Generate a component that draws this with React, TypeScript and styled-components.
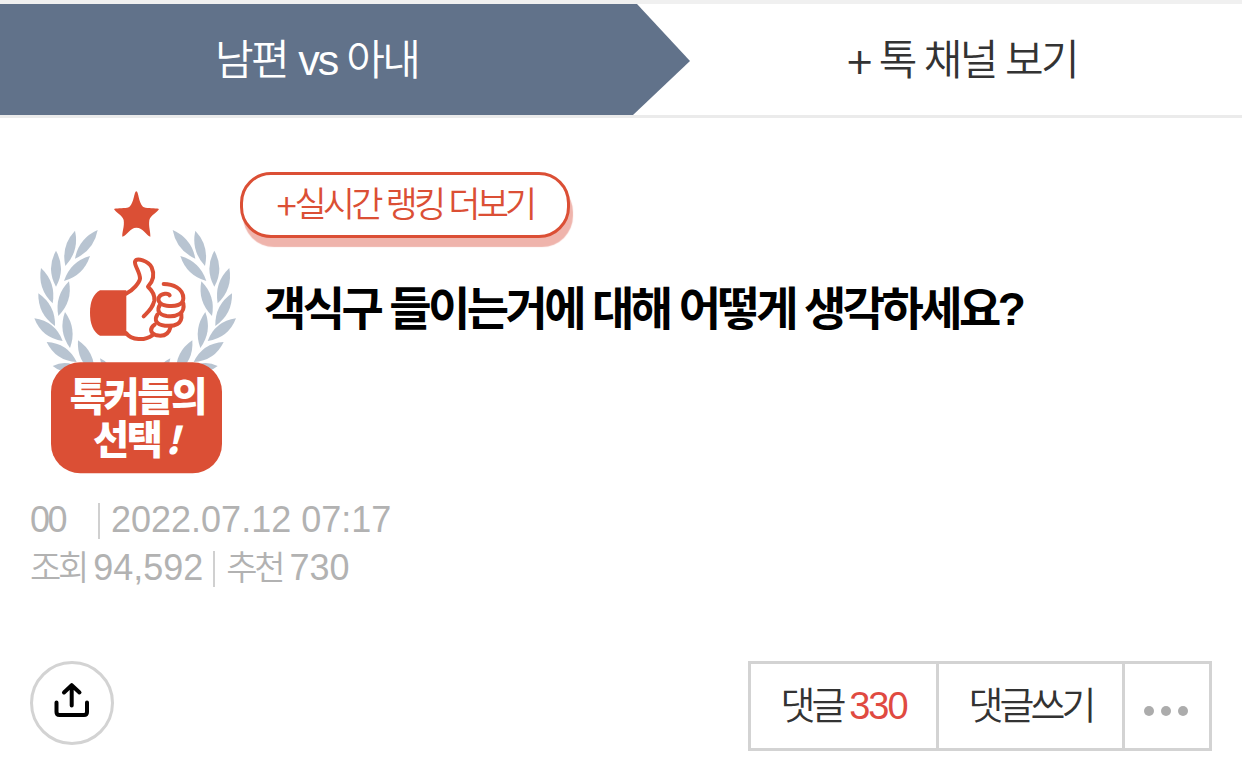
import React from 'react';
import styled, { createGlobalStyle } from 'styled-components';

const GlobalStyle = createGlobalStyle`
  * {
    box-sizing: border-box;
  }

  body {
    margin: 0;
    background: #ffffff;
    font-family: 'Liberation Sans', 'Noto Sans CJK KR', sans-serif;
    font-weight: 350;
  }

  button {
    font-family: inherit;
    font-weight: inherit;
    padding: 0;
    cursor: pointer;
  }
`;

// tip x, tip y, base x, base y, bulge
const leaves = [
  [165, 152, 136, 258, 29],
  [233, 150, 165, 236, 29],
  [210, 228, 132, 303, 29],
  [108, 212, 108, 320, 30],
  [63, 264, 98, 370, 30],
  [147, 304, 115, 408, 29],
  [55, 340, 105, 438, 30],
  [135, 396, 150, 504, 29],
  [43, 415, 128, 483, 32],
  [80, 486, 170, 546, 32],
  [174, 481, 222, 580, 32],
  [98, 558, 180, 566, 26],
  [240, 535, 280, 590, 20],
];

const leafPath = ([tx, ty, bx, by, bulge]: number[]) => {
  const length = Math.hypot(bx - tx, by - ty);
  const nx = (-(by - ty) / length) * bulge;
  const ny = ((bx - tx) / length) * bulge;
  const mx = (tx + bx) / 2;
  const my = (ty + by) / 2;
  return `M${tx} ${ty}Q${mx + nx} ${my + ny} ${bx} ${by}Q${mx - nx} ${my - ny} ${tx} ${ty}Z`;
};

const Wreath = () => (
  <g fill="#b8c4d1">
    {leaves.map((leaf, i) => (
      <path key={i} d={leafPath(leaf)} />
    ))}
  </g>
);

const ChoiceBadge = () => (
  <BadgeSvg viewBox="30 30 630 855">
    <Wreath />
    <g transform="translate(691 0) scale(-1 1)">
      <Wreath />
    </g>
    <path
      fill="#db4f35"
      d="M349 34C356 34 356 74 372 82C383 86 405 84 417 87C412 98 392 105 388 120C385 140 392 155 391 170C378 165 370 143 349 143C330 143 322 165 307 170C306 155 314 140 311 120C307 105 287 98 282 87C295 84 315 86 326 82C342 74 342 34 349 34Z"
    />
    <path fill="#db4f35" d="M319 331H240Q210 348 210 398Q210 450 240 467H319Z" />
    <g fill="none" stroke="#db4f35" strokeWidth="12" strokeLinecap="round" strokeLinejoin="round">
      <path d="M318 341C340 330 358 308 360 296C360 275 343 258 345 245C350 231 385 243 395 262C405 285 398 305 384 320C400 335 405 350 403 362C398 385 385 395 371 409" />
      <path d="M318 459C335 482 375 482 397 466" />
      <path d="M431 312C458 312 490 325 490 355C490 376 465 380 440 377C415 374 412 358 418 350C425 340 445 338 449 346" />
      <path d="M490 370C496 400 470 412 440 408C415 404 410 390 420 374" />
      <path d="M484 402C488 432 465 440 435 437C408 434 402 420 412 404" />
      <path d="M452 440C446 464 430 470 410 466C390 460 388 445 404 434" />
    </g>
    <rect x="93" y="547" width="513" height="333" rx="88" fill="#db4f35" />
    <BadgeText x="149" y="692">
      톡커들의
    </BadgeText>
    <BadgeText x="219" y="821">
      선택
      <tspan dx="14" fontStyle="italic" fontSize="112">
        !
      </tspan>
    </BadgeText>
  </BadgeSvg>
);

const App: React.FC = () => {
  return (
    <>
      <GlobalStyle />
      <Header>
        <CurrentTab>
          남편 <Latin>vs</Latin> 아내
        </CurrentTab>
        <ChannelTab>
          <Plus>+</Plus> 톡 채널 보기
        </ChannelTab>
      </Header>
      <Article>
        <Top>
          <ChoiceBadge />
          <Heading>
            <RankingButton>
              <SmallPlus>+</SmallPlus>실시간 랭킹 더보기
            </RankingButton>
            <Title>객식구 들이는거에 대해 어떻게 생각하세요?</Title>
          </Heading>
        </Top>
        <Meta>
          <MetaRow>
            <Writer>00</Writer>
            <Bar />
            <Num>2022.07.12 07:17</Num>
          </MetaRow>
          <MetaRow>
            <Label>조회</Label>
            <Num>94,592</Num>
            <Bar />
            <Label>추천</Label>
            <Num>730</Num>
          </MetaRow>
        </Meta>
        <Actions>
          <ShareButton aria-label="공유">
            <svg width="36" height="36" viewBox="0 0 36 36" fill="none" stroke="#000" strokeWidth="4" strokeLinecap="round" strokeLinejoin="round">
              <path d="M2.5 17.5V27Q2.5 30 5.5 30H30Q33 30 33 27V17.5" />
              <path d="M17.7 20.5V0.8M10 7.5L17.7 0.2L25.5 7.5" />
            </svg>
          </ShareButton>
          <ButtonGroup>
            <GroupButton width={188}>
              댓글 <Count>330</Count>
            </GroupButton>
            <GroupButton width={186}>댓글쓰기</GroupButton>
            <GroupButton width={84} aria-label="더보기">
              <Dots>
                <i />
                <i />
                <i />
              </Dots>
            </GroupButton>
          </ButtonGroup>
        </Actions>
      </Article>
    </>
  );
};

export default App;

const Header = styled.header`
  display: flex;
  height: 118px;
  border-top: 4px solid #f0f0f0;
  border-bottom: 3px solid #ebebeb;
  font-size: 42px;
  line-height: 113px;
  letter-spacing: -2.6px;
  white-space: pre;
`;

const CurrentTab = styled.div`
  width: 690px;
  padding-left: 215px;
  background: #61728a;
  color: #ffffff;
  clip-path: polygon(0 0, 637px 0, 100% 57px, 633px 100%, 0 100%);
`;

const Latin = styled.span`
  margin-left: 2px;
  font-size: 43px;
  letter-spacing: -2px;
`;

const ChannelTab = styled.div`
  flex: 1;
  padding-left: 157px;
  color: #333333;
`;

const Plus = styled.span`
  display: inline-block;
  font-family: 'Noto Sans CJK KR', sans-serif;
  font-size: 46px;
  line-height: 1;
  transform: translateY(4px);
`;

const Article = styled.main`
  padding: 54px 30px 0;
`;

const Top = styled.section`
  display: flex;
  height: 321px;
`;

const BadgeSvg = styled.svg`
  width: 210px;
  height: 285px;
  margin-top: 18px;
  overflow: visible;
`;

const BadgeText = styled.text`
  font-family: 'Noto Sans CJK KR', sans-serif;
  font-size: 118px;
  font-weight: 900;
  letter-spacing: -7px;
  fill: #ffffff;
`;

const Heading = styled.div`
  flex: 1;
`;

const RankingButton = styled.button`
  display: block;
  width: 330px;
  height: 66px;
  border: 3px solid #db4f35;
  border-radius: 31px;
  background: #ffffff;
  box-shadow: 3px 9px 1px #efb4ac;
  color: #db4f35;
  font-size: 35px;
  line-height: 60px;
  letter-spacing: -3.8px;
  white-space: nowrap;
`;

const SmallPlus = styled.span`
  display: inline-block;
  font-family: 'Noto Sans CJK KR', sans-serif;
  font-size: 37px;
  line-height: 1;
  letter-spacing: -2.4px;
  transform: translateY(3px);
`;

const Title = styled.h1`
  margin: 41px 0 0 24px;
  color: #000000;
  font-size: 46px;
  font-weight: 700;
  line-height: 60px;
  letter-spacing: -3.6px;
  white-space: nowrap;
`;

const Meta = styled.div`
  padding-top: 3px;
  color: #b2b2b2;
  font-size: 36px;
`;

const MetaRow = styled.div`
  display: flex;
  align-items: center;
  height: 48px;
  line-height: 48px;
`;

const Writer = styled.span`
  width: 58px;
  letter-spacing: -2.5px;
`;

const Bar = styled.i`
  width: 2px;
  height: 36px;
  margin: 2px 11px 0 10px;
  background: #d0d0d0;
`;

const Label = styled.span`
  margin-right: 7px;
  font-size: 34px;
  letter-spacing: -3.2px;
`;

const Num = styled.span``;

const Actions = styled.div`
  display: flex;
  justify-content: space-between;
  margin-top: 69px;
`;

const ShareButton = styled.button`
  display: flex;
  align-items: center;
  justify-content: center;
  width: 84px;
  height: 84px;
  border: 3px solid #d3d3d3;
  border-radius: 50%;
  background: #ffffff;

  svg {
    overflow: visible;
  }
`;

const ButtonGroup = styled.div`
  display: flex;
  width: 464px;
  height: 90px;
  border: 3px solid #d3d3d3;
`;

const GroupButton = styled.button<{ width: number }>`
  width: ${({ width }) => width}px;
  border: 0;
  border-right: 3px solid #d3d3d3;
  background: #ffffff;
  color: #333333;
  font-size: 38px;
  line-height: 80px;
  letter-spacing: -3.9px;
  white-space: nowrap;

  &:last-child {
    border-right: 0;
  }
`;

const Count = styled.span`
  color: #e04a41;
  letter-spacing: -2px;
`;

const Dots = styled.span`
  display: flex;
  justify-content: center;
  gap: 7px;
  padding: 9px 2px 0 0;

  i {
    width: 10px;
    height: 10px;
    border-radius: 50%;
    background: #acacac;
  }
`;
